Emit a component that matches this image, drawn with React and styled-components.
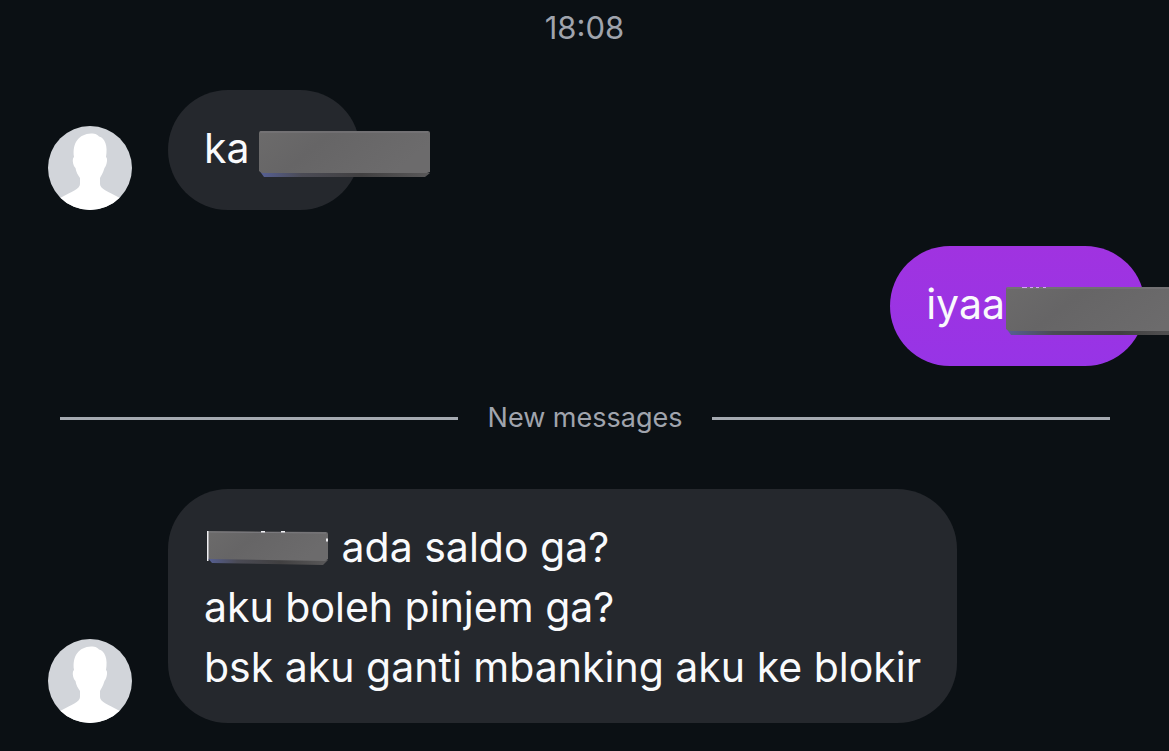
import React from "react";
import styled, { createGlobalStyle } from "styled-components";

const GlobalStyle = createGlobalStyle`
  * { box-sizing: border-box; }
  body {
    margin: 0;
    background: #0b1014;
    color: #f9fafc;
    font-family: Inter, "Liberation Sans", sans-serif;
  }
`;

const Thread = styled.main`
  display: flex;
  flex-direction: column;
  min-height: 100vh;
  padding: 8px 0 28px;
  overflow: hidden;
`;

const Time = styled.time`
  align-self: center;
  margin-bottom: 42px;
  color: #a0a4ad;
  font-size: 31px;
  line-height: 40px;
`;

const Row = styled.article`
  display: flex;
  align-items: flex-end;
  justify-content: ${(p) => (p.$own ? "flex-end" : "flex-start")};
  gap: 36px;
  padding: 0 24px 0 48px;
`;

const OwnRow = styled(Row)`
  margin: 36px 0 34px;
`;

const Bubble = styled.div`
  min-height: 120px;
  padding: 28px 36px 26px;
  border-radius: 60px;
  background: ${(p) => (p.$own ? "linear-gradient(#a033e0, #9734e6)" : "#25282d")};
`;

const Line = styled.p`
  display: flex;
  margin: 0;
  font-size: 41px;
  line-height: 60px;
  white-space: pre;
`;

const Slot = styled.span`
  position: relative;
  width: ${(p) => p.$width}px;
`;

const Cover = styled.svg`
  position: absolute;
  top: ${(p) => p.$top}px;
  left: ${(p) => p.$left}px;
  display: block;
`;

const AvatarArt = styled.svg`
  flex: none;
  width: 84px;
  height: 84px;
`;

const Divider = styled.div`
  display: flex;
  align-items: center;
  gap: 30px;
  margin-bottom: 53px;
  padding: 0 59px 0 60px;
  color: #a0a4ad;
  font-size: 27px;
  line-height: 36px;

  &::before,
  &::after {
    content: "";
    flex: 1;
    height: 3px;
    background: #a5aab1;
  }
`;

function Avatar({ id }) {
  return (
    <AvatarArt viewBox="0 0 84 84" role="img" aria-label="Profile picture">
      <clipPath id={id}>
        <circle cx="42" cy="42" r="42" />
      </clipPath>
      <g clipPath={`url(#${id})`}>
        <rect width="84" height="84" fill="#d2d5da" />
        <path
          fill="#fff"
          d="M26 31C24 17 31 8 43 7.500C48 7.500 50 9 51 10.500C57 12 60 20 58 31C60 32 59 39 56.500 42C55 47 53 50 52 52V58C52 63 61 66 70 71C74 73 76 76 77 84H7C8 76 10 73 14 71C23 66 32 63 32 58V52C30 49 28 46 27.500 42C24.500 39 24 32 26 31Z"
        />
      </g>
    </AvatarArt>
  );
}

function Block({ id, width, height, top, left, children, slant = 0 }) {
  const face = height - 4;
  return (
    <Cover $top={top} $left={left} width={width} height={height + 3} aria-hidden="true">
      <defs>
        <linearGradient id={`${id}-face`} x2="1" y2="0.3">
          <stop offset="0" stopColor="#6c6b6b" />
          <stop offset="0.4" stopColor="#666566" />
          <stop offset="1" stopColor="#6c6b6c" />
        </linearGradient>
        <linearGradient id={`${id}-edge`}>
          <stop offset="0" stopColor="#566095" />
          <stop offset="0.25" stopColor="#4b4b55" />
          <stop offset="0.6" stopColor="#414041" />
          <stop offset="1" stopColor="#595859" />
        </linearGradient>
      </defs>
      <path
        d={`M0 ${face - 3}L5 ${height - slant}L${width - 5} ${height + slant}L${width} ${face}Z`}
        fill={`url(#${id}-edge)`}
      />
      <path
        d={`M2 0L${width - 2} ${slant}Q${width} ${slant} ${width} ${slant + 2}V${face - 1}L${width - 3} ${face + slant}L3 ${face - slant}L0 ${face - 2}V2Q0 0 2 0Z`}
        fill={`url(#${id}-face)`}
      />
      <path d={`M1 1L${width - 2} ${slant + 1}`} stroke="#7c7b7f" />
      {children}
    </Cover>
  );
}

export default function App() {
  return (
    <>
      <GlobalStyle />
      <Thread>
        <Time>18:08</Time>

        <Row>
          <Avatar id="avatar-first" />
          <Bubble>
            <Line>
              ka
              <Slot $width={74}>
                <Block id="first" width={171} height={46} top={13} left={9} />
              </Slot>
            </Line>
          </Bubble>
        </Row>

        <OwnRow $own>
          <Bubble $own>
            <Line>
              iyaa
              <Slot $width={104}>
                <Block id="own" width={190} height={48} top={13} left={1}>
                  <path d="M16 0h5M24 0h3M30 0h3M37 0h3" stroke="#d3a9ed" strokeWidth="2" />
                </Block>
              </Slot>
            </Line>
          </Bubble>
        </OwnRow>

        <Divider role="separator">New messages</Divider>

        <Row>
          <Avatar id="avatar-last" />
          <Bubble>
            <Line>
              <Slot $width={126}>
                <Block id="last" width={121} height={33} top={14} left={3} slant={1}>
                  <path d="M0 0V30" stroke="#eeeef1" strokeWidth="3" />
                  <path d="M54 0h4M74 0h4M119 9h2" stroke="#eeeef1" strokeWidth="3" />
                </Block>
              </Slot>
              {" ada saldo ga?"}
            </Line>
            <Line>aku boleh pinjem ga?</Line>
            <Line>bsk aku ganti mbanking aku ke blokir</Line>
          </Bubble>
        </Row>
      </Thread>
    </>
  );
}
